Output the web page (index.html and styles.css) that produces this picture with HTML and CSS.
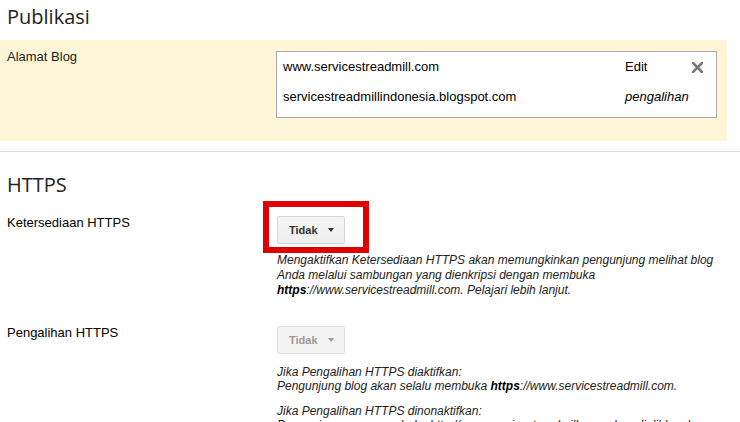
FILE: index.html
```html
<!DOCTYPE html>
<html>
<head>
<meta charset="utf-8">
<link rel="stylesheet" href="styles.css">
</head>
<body>
<div class="page">
  <h2 class="sect-title first">Publikasi</h2>
  <div class="row highlight">
    <div class="label">Alamat Blog</div>
    <div class="content">
      <div class="addr-box">
        <div class="addr-row">
          <span class="url">www.servicestreadmill.com</span>
          <span class="action">Edit</span>
          <span class="close"><svg width="11" height="11" viewBox="0 0 11 11"><path d="M1 1L10 10M10 1L1 10" stroke="#777" stroke-width="2.6" stroke-linecap="square"/></svg></span>
        </div>
        <div class="addr-row">
          <span class="url">servicestreadmillindonesia.blogspot.com</span>
          <span class="action redirect">pengalihan</span>
          <span class="close"></span>
        </div>
      </div>
    </div>
  </div>
  <div class="divider"></div>
  <h2 class="sect-title">HTTPS</h2>
  <div class="row setting">
    <div class="label">Ketersediaan HTTPS</div>
    <div class="content">
      <div class="btn-wrap">
        <button class="dropdown">Tidak<span class="caret"></span></button>
        <span class="annot"></span>
      </div>
      <p class="desc first-desc">Mengaktifkan Ketersediaan HTTPS akan memungkinkan pengunjung melihat blog Anda melalui sambungan yang dienkripsi dengan membuka <b>https</b>://www.servicestreadmill.com. Pelajari lebih lanjut.</p>
    </div>
  </div>
  <div class="row setting second">
    <div class="label">Pengalihan HTTPS</div>
    <div class="content">
      <div class="btn-wrap">
        <button class="dropdown disabled">Tidak<span class="caret"></span></button>
      </div>
      <p class="desc second-desc">Jika Pengalihan HTTPS diaktifkan:<br>Pengunjung blog akan selalu membuka <b>https</b>://www.servicestreadmill.com.</p>
      <p class="desc">Jika Pengalihan HTTPS dinonaktifkan:<br>Pengunjung yang membuka http://www.servicestreadmill.com akan dialihkan ke https.</p>
    </div>
  </div>
</div>
</body>
</html>
```
FILE: styles.css
```css
html, body {
  margin: 0;
  padding: 0;
  background: #fff;
}
body {
  font-family: "Liberation Sans", Arial, sans-serif;
  font-size: 13px;
  color: #222;
  overflow: hidden;
}
.page {
  width: 740px;
  height: 422px;
  overflow: hidden;
}
.sect-title {
  font-family: "Open Sans", "Noto Sans", sans-serif;
  font-weight: 400;
  font-size: 20px;
  line-height: 27px;
  color: #222;
  margin: 0;
  padding-left: 7px;
}
.sect-title.first {
  padding-top: 3px;
  height: 37px;
}
.sect-title.second-title {
  margin-top: 19px;
  height: 27px;
}
.row {
  display: flex;
}
.label {
  width: 270px;
  padding-left: 7px;
  line-height: 15px;
  flex: none;
}
.content {
  flex: 1;
}
.highlight {
  background: #fff6d7;
  width: 727px;
  height: 101px;
  box-sizing: border-box;
  padding-top: 9px;
}
.highlight .label {
  width: 269px;
}
.addr-box {
  margin-top: 2px;
  width: 441px;
  box-sizing: border-box;
  border: 1px solid #aaa;
  background: #fff;
  padding: 0 13px 5px 6px;
}
.addr-row {
  display: flex;
  align-items: center;
  height: 30px;
  line-height: 30px;
  color: #000;
}
.url {
  flex: 1;
}
.action {
  width: 67px;
}
.redirect {
  font-style: italic;
}
.close {
  width: 11px;
  height: 11px;
  display: flex;
}
.divider {
  margin-top: 10px;
  height: 1px;
  background: #dcdcdc;
}
.divider + .sect-title {
  margin-top: 19px;
  height: 27px;
}
.setting {
  margin-top: 17px;
}
.setting .label {
  color: #000;
}
.btn-wrap {
  position: relative;
  display: inline-block;
  vertical-align: top;
}
.dropdown {
  display: flex;
  align-items: center;
  box-sizing: border-box;
  width: 68px;
  height: 28px;
  padding: 0 0 0 11px;
  margin: 1px 0 0 0;
  border: 1px solid #d6d6d6;
  border-radius: 2px;
  background: linear-gradient(#f5f5f5, #efefef);
  font-family: "Liberation Sans", Arial, sans-serif;
  font-weight: 700;
  font-size: 11px;
  color: #333;
}
.caret {
  margin-left: 10px;
  width: 0;
  height: 0;
  border-left: 3.5px solid transparent;
  border-right: 3.5px solid transparent;
  border-top: 4px solid #333;
}
.dropdown.disabled {
  color: #999;
  border-color: #e2e2e2;
  background: #f4f4f4;
}
.dropdown.disabled .caret {
  border-top-color: #999;
}
.annot {
  position: absolute;
  left: -14px;
  top: -14px;
  width: 106px;
  height: 52px;
  box-sizing: border-box;
  border: 6px solid #e00000;
}
.desc {
  margin: 0;
  font-style: italic;
  font-size: 12px;
  line-height: 14px;
  color: #222;
  width: 450px;
}
.desc b {
  font-weight: 700;
  color: #000;
}
.first-desc {
  margin-top: 9px;
  line-height: 15px;
}
.second {
  margin-top: 27px;
}
.second-desc {
  margin-top: 11px;
  margin-bottom: 11px;
}
```
